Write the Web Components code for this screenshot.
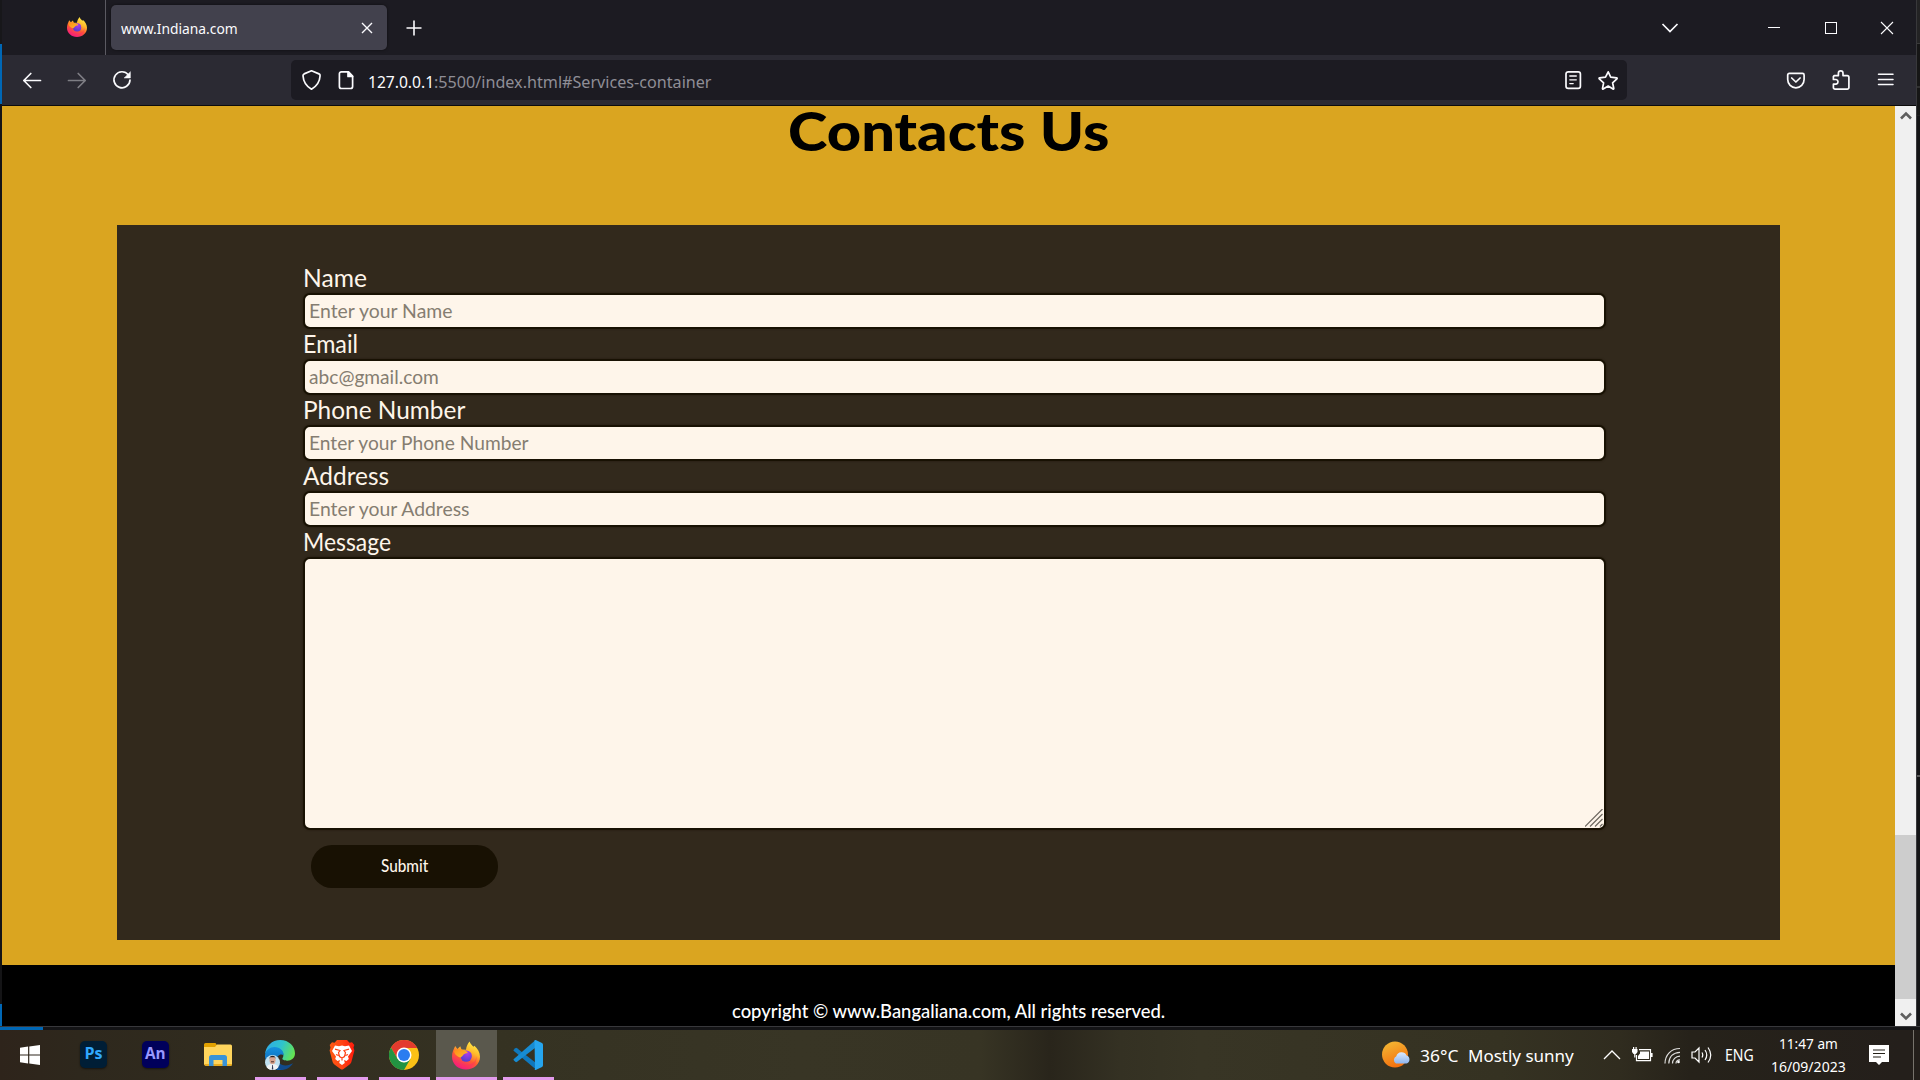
<!DOCTYPE html>
<html lang="en">
<head>
<meta charset="utf-8">
<title>www.Indiana.com</title>
<style>
html,body{margin:0;padding:0;width:1920px;height:1080px;overflow:hidden;background:#141416}
</style>
</head>
<body>
<desktop-screen></desktop-screen>
<script>
const define = (name, html, init) => {
  const t = document.createElement('template');
  t.innerHTML = html;
  customElements.define(name, class extends HTMLElement {
    connectedCallback() {
      if (this.shadowRoot) return;
      this.attachShadow({mode: 'open'}).append(t.content.cloneNode(true));
      if (init) init(this, this.shadowRoot);
    }
  });
};

define('desktop-screen', `
<style>
:host{display:flex;flex-direction:column;width:1920px;height:1080px;overflow:hidden}
.top{display:flex;height:1026px}
.l{width:2px;background:linear-gradient(#17171a 0 44px,#0067b5 44px 104px,#141416 104px 1004px,#0067b5 1004px)}
.r{width:4px;box-sizing:border-box;border-left:1px solid #38383b;background:linear-gradient(#232324 0 43px,#3a3a3a 43px 44px,#161616 44px 86px,#303030 86px 88px,#161616 88px 115px,#1f1f1f 115px 116px,#141416 116px 775px,#5a5a5a 775px 777px,#141416 777px)}
.edge{height:4px;box-sizing:border-box;border-top:1px solid #38383b;background:linear-gradient(90deg,#0067b5 43px,#141416 43px)}
browser-window{flex:1}
</style>
<div class="top"><div class="l"></div><browser-window></browser-window><div class="r"></div></div>
<div class="edge"></div>
<task-bar></task-bar>`);

define('browser-window', `
<style>
:host{display:flex;flex-direction:column;height:1026px;min-width:0}
.view{display:flex;height:920px;border-top:1px solid #0c0c0d}
contact-page{flex:1}
</style>
<tab-strip></tab-strip><nav-bar></nav-bar>
<div class="view"><contact-page></contact-page><scroll-bar></scroll-bar></div>`);

define('fire-fox', `
<style>:host{display:block}svg{display:block;width:100%;height:100%}</style>
<svg viewBox="0 0 28 28">
<defs>
<linearGradient id="a" x1=".8" y1="0" x2=".3" y2="1"><stop offset="0" stop-color="#fff14c"/><stop offset=".35" stop-color="#ffb92a"/><stop offset=".62" stop-color="#ff5b32"/><stop offset="1" stop-color="#f2128a"/></linearGradient>
<radialGradient id="b" cx=".6" cy=".25" r=".8"><stop offset="0" stop-color="#b23be8"/><stop offset="1" stop-color="#4b3fcf"/></radialGradient>
<linearGradient id="c" x1="0" y1="0" x2="1" y2="1"><stop offset="0" stop-color="#ff8a16"/><stop offset="1" stop-color="#ffbd2b"/></linearGradient>
</defs>
<path d="M3.2 4.6 5.4 7.4 8.3 4.8 9.5 8 14 8.2C14.3 4.6 16 2 17.6 0c.5 2.2 2.3 3.5 3.8 5.2l1-1C25.500 7 28 10.600 28 15.200 28 22.500 21.800 28 14 28S0 22.600 0 15.200C0 11 1.600 7.800 3.200 4.600Z" fill="url(#a)"/>
<circle cx="14.200" cy="14.600" r="5.700" fill="url(#b)"/>
<path d="M2 9.500 5.400 7.400 9.500 8l4.300 1.500c1.400.5 2.100 1 1.700 1.700-1.200 1-3.100.7-3.900 1.900-.6 1.200-1.700 2-2.900 2.800C5.400 15.500 2.500 13 2 9.500Z" fill="url(#c)"/>
<path d="M0 15c2 5 6 8.500 13 8.500S24 20 24.300 15c.9 4-1.500 8.600-6 10.500C10 29 1.500 24 0 15Z" fill="#ff2d63" opacity=".45"/>
</svg>`);

define('tab-strip', `
<style>
:host{display:flex;align-items:center;height:55px;background:#1c1b22;color:#fbfbfe}
.ff{width:20px;height:20px;margin:-1px 18px 0 65px}
.sep{width:1px;height:55px;background:#5b5a62;margin-right:5px}
.tab{display:flex;align-items:center;box-sizing:border-box;width:276px;height:45px;background:#42414d;border-radius:5px;padding-left:10px;box-shadow:0 0 3px #0008}
.tab .x{margin-left:122.500px}
svg{display:block;fill:none;stroke:#fbfbfe}
</style>
<fire-fox class="ff"></fire-fox><div class="sep"></div>
<div class="tab"><fit-text w="117" font="Noto Sans" size="15" h="22" dy="0">www.Indiana.com</fit-text>
<svg class="x" width="12" height="12" stroke-width="1.4"><path d="M1 1 11 11M11 1 1 11"/></svg></div>
<svg width="16" height="16" stroke-width="1.6" style="margin-left:18.500px"><path d="M8 .5v15M.5 8h15"/></svg>
<svg width="18" height="12" stroke-width="1.7" style="margin-left:1239.500px"><path d="m1.500 2 7.500 7.500L16.500 2"/></svg>
<svg width="12" height="12" stroke-width="1" style="margin-left:89px" shape-rendering="crispEdges"><path d="M0 5.500h12"/></svg>
<svg width="12" height="12" stroke-width="1" style="margin-left:45px" shape-rendering="crispEdges"><path d="M.5.500h11v11H.500z"/></svg>
<svg width="14" height="14" stroke-width="1.1" style="margin-left:43px"><path d="M1 1 13 13M13 1 1 13"/></svg>`);

define('nav-bar', `
<style>
:host{display:flex;align-items:center;height:50px;background:#2b2a33}
svg{display:block;fill:none;stroke:#fbfbfe;stroke-width:1.7;stroke-linejoin:round;stroke-linecap:round}
.url{display:flex;align-items:center;box-sizing:border-box;width:1336px;height:40px;margin-left:159px;background:#1c1b22;border-radius:5px;padding-left:10.500px}
.h{color:#fbfbfe}.g{color:#8f8e96}
</style>
<svg width="20" height="20" style="margin-left:20px"><path d="M18.500 10.500H1.800M8.800 3.500 1.800 10.500l7 7"/></svg>
<svg width="20" height="20" style="margin-left:25px;opacity:.4"><path d="M1.500 10.500h16.700M11.200 3.500l7 7-7 7"/></svg>
<svg width="20" height="20" style="margin-left:25px"><path d="M16.300 4.800A8 8 0 1 0 18 10"/><path d="M18.400 2v6h-6z" fill="#fbfbfe" stroke-width=".5"/></svg>
<div class="url">
<svg width="20" height="22"><path d="M9.500 1.800 17 4.900c.9.400 1.200.9 1.100 1.900-.4 6.200-3.300 10.500-8.600 13.400C4.200 17.300 1.400 13 1 6.800c0-1 .3-1.500 1.100-1.900z"/></svg>
<svg width="16" height="20" style="margin-left:16px"><path d="M3.500 1.800h7L14.600 6v10.500a2 2 0 0 1-2 2H3.400a2 2 0 0 1-2-2V3.800a2 2 0 0 1 2-2z"/><path d="M10 1.800V6.500h4.600z" fill="#fbfbfe"/></svg>
<fit-text class="h" style="margin-left:14.500px" w="66" font="Noto Sans" size="16.8" h="24" dy="1.500">127.0.0.1</fit-text><fit-text class="g" w="278" font="Noto Sans" size="16.8" h="24" dy="1.500">:5500/index.html#Services-container</fit-text>
<svg width="17" height="20" style="margin-left:853px"><rect x="1" y="1.800" width="14.400" height="16.600" rx="2.200"/><path d="M4.800 6h6.500M4.800 9.800h6.500M4.800 13.600h3.400" stroke-width="1.300"/></svg>
<svg width="21" height="21" style="margin-left:16px"><path d="m10.200 1.800 2.500 5.400 5.900.7c.6.100.7.500.3.900l-4.300 4 1.200 5.700c0 .6-.4.800-.8.500l-4.800-2.900-5 2.900c-.5.300-.8 0-.7-.5l1.100-5.700-4.300-4c-.4-.4-.3-.8.300-.9l5.900-.7z"/></svg>
</div>
<svg width="20" height="20" style="margin-left:159px"><path d="M3.300 3.300h13.200a1.600 1.600 0 0 1 1.600 1.600v4.700a8.200 8.200 0 0 1-16.400 0V4.900a1.600 1.600 0 0 1 1.600-1.600z"/><path d="m5.700 8 4.200 4 4.200-4"/></svg>
<svg width="20" height="22" style="margin-left:26px"><path d="M2.200 6.600h4.200V4.200a2.300 2.300 0 0 1 4.600 0v2.400h4.200a1.700 1.700 0 0 1 1.700 1.700v10.200a1.600 1.600 0 0 1-1.700 1.600H3a1.600 1.600 0 0 1-1.600-1.600v-3.300h2.700a2.400 2.400 0 0 0 0-4.700H1.400V7.600z"/></svg>
<svg width="18" height="20" style="margin-left:25px;stroke-width:1.500"><path d="M1.500 4.200h14.500M1.500 9.400h14.500M1.500 14.600h14.500"/></svg>`);

define('scroll-bar', `
<style>
:host{display:flex;flex-direction:column;width:21px;height:920px;background:#f0f0f0;align-items:center}
.thumb{flex:none;width:21px;height:164px;background:#cdcdcd;margin:714px 0 13px}
svg{display:block;flex:none;fill:none;stroke:#5e5e5e;stroke-width:2.600}
</style>
<svg width="12" height="10" style="margin-top:5px"><path d="m1 7.500 5-5 5 5"/></svg>
<div class="thumb"></div>
<svg width="12" height="10"><path d="m1 1.500 5 5 5-5"/></svg>`);

define('form-field', `
<style>
:host{display:block;height:66px}
.lab{height:32px;color:#fef5ea}
.box{box-sizing:border-box;height:36px;border:2px solid #181103;border-radius:7px;background:#fef5ea;padding:2px 4px 0;color:#857d71;margin-top:-2px;box-shadow:0 0 2px #181103aa}
:host([area]) .box{height:273px}
:host([area]){height:301px}
.box{display:flex;justify-content:space-between}
svg{display:none;align-self:flex-end;margin:0 -3px 1px 0}
:host([area]) svg{display:block}
</style>
<div class="lab"><slot name="label"></slot></div>
<div class="box"><slot></slot><svg width="18" height="18" fill="none" stroke="#6d675f" stroke-width="1.200"><path d="M0 17.500 17.500 0M5 17.500 17.500 5M10 17.500 17.500 10M15 17.500l2.500-2.500"/></svg></div>`);

define('contact-page', `
<style>
:host{display:flex;flex-direction:column;align-items:flex-start;background:#daa520;height:920px}
.head{height:119px;padding-left:786px;color:#000}
.panel{box-sizing:border-box;margin-left:115px;width:1663px;height:715px;background:#32291c;padding:38px 174px 0 186px}
.btn{display:flex;justify-content:center;align-items:center;width:187px;height:43px;border-radius:21px;background:#181103;color:#fef5ea;margin:17px 0 0 8px}
.foot{box-sizing:border-box;align-self:stretch;height:61px;margin-top:25px;background:#000;color:#fff;padding:33px 0 0 730px}
</style>
<div class="head"><fit-text w="321" font="Lato" weight="900" size="53" h="50" dy="-.5">Contacts Us</fit-text></div>
<div class="panel">
<form-field><fit-text slot="label" w="64" size="25" h="30" dy="-.8">Name</fit-text><fit-text w="143" size="19" h="26" dy="1">Enter your Name</fit-text></form-field>
<form-field><fit-text slot="label" w="55" size="25" h="30" dy="-.8">Email</fit-text><fit-text w="130" size="19" h="26" dy="1">abc@gmail.com</fit-text></form-field>
<form-field><fit-text slot="label" w="162" size="25" h="30" dy="-.8">Phone Number</fit-text><fit-text w="220" size="19" h="26" dy="1">Enter your Phone Number</fit-text></form-field>
<form-field><fit-text slot="label" w="86" size="25" h="30" dy="-.8">Address</fit-text><fit-text w="160" size="19" h="26" dy="1">Enter your Address</fit-text></form-field>
<form-field area><fit-text slot="label" w="88" size="25" h="30" dy="-.8">Message</fit-text><span></span></form-field>
<div class="btn"><fit-text w="47" size="16.300" weight="500" h="22" dy="-.8">Submit</fit-text></div>
</div>
<div class="foot"><fit-text w="433" size="18.800" weight="500" h="26">copyright © www.Bangaliana.com, All rights reserved.</fit-text></div>`);

define('task-app', `
<style>
:host{display:flex;flex-direction:column;align-items:center;justify-content:space-between;box-sizing:border-box;height:50px;width:51px;padding-top:10px}
:host([active]){width:61px;background:#5a584d}
.i{height:30px;display:flex;align-items:center;justify-content:center;margin-left:-1px}
.u{height:3px;align-self:stretch}
:host([open]) .u{background:#e39bec}
::slotted(svg){display:block}
</style><div class="i"><slot></slot></div><div class="u"></div>`);

define('adobe-tile', `
<style>:host{display:flex;align-items:center;justify-content:center;width:27px;height:27px;border-radius:5px;background:var(--bg);color:var(--fg);box-shadow:0 1px 2px #0008;margin:-2px 0 0 1px}</style><slot></slot>`);

define('task-bar', `
<style>
:host{display:flex;height:50px;color:#fff;background:linear-gradient(90deg,#2e241b 0,#2e281d 80px,#322e20 300px,#353222 500px,#383525 800px,#373424 980px,#29251b 1050px,#343123 1120px,#383525 1200px,#353222 1500px,#302c1f 1620px,#26221a 1690px,#241f1b 1900px)}
.tray{display:flex;align-items:center;margin-left:auto;height:50px}
.clk{display:flex;flex-direction:column;align-items:center;width:76px;margin-left:16px}
.w{fill:none;stroke:#fff}
svg{display:block;flex:none}
</style>
<task-app style="margin-left:5px"><svg width="20" height="20" fill="#fff"><path d="M0 2.800 8.100 1.600V9.400H0zM9.300 1.400 20 0v9.400H9.300zM0 10.600h8.100v7.800L0 17.200zM9.300 10.600H20V20L9.300 18.600z"/></svg></task-app>
<task-app style="margin-left:12px"><adobe-tile style="--bg:#001e36;--fg:#31a8ff"><fit-text font="Open Sans" weight="700" size="16" w="18" h="20" dy="-1">Ps</fit-text></adobe-tile></task-app>
<task-app style="margin-left:11px"><adobe-tile style="--bg:#00005b;--fg:#9999ff"><fit-text font="Open Sans" weight="700" size="16" w="21" h="20" dy="-1">An</fit-text></adobe-tile></task-app>
<task-app style="margin-left:11px"><svg width="28" height="30" viewBox="0 0 28 30" style="margin-left:1px"><path d="M0 4.500A1.500 1.500 0 0 1 1.500 3h10l2 3H27v6H0z" fill="#e2a100"/><path d="M0 7h11l2-2.500h13.500A1.500 1.500 0 0 1 28 6v18a1.500 1.500 0 0 1-1.500 1.500h-25A1.500 1.500 0 0 1 0 24z" fill="#ffd55d"/><path d="M0 24h28v.5a1.500 1.500 0 0 1-1.500 1.500h-25z" fill="#e9ac20"/><path d="M5 26V17.500A2.500 2.500 0 0 1 7.500 15h13a2.500 2.500 0 0 1 2.500 2.500V26h-4.500v-6h-9v6z" fill="#3993d8"/></svg></task-app>
<task-app open style="margin-left:12px"><svg width="30" height="30" viewBox="0 0 30 30"><defs><linearGradient id="e1" x1="0" y1=".3" x2="1" y2=".6"><stop offset="0" stop-color="#2fabe7"/><stop offset=".5" stop-color="#2fc4cc"/><stop offset="1" stop-color="#66e44e"/></linearGradient><linearGradient id="e2" x1="0" y1="0" x2="0" y2="1"><stop offset="0" stop-color="#1591df"/><stop offset="1" stop-color="#0c59a5"/></linearGradient></defs>
<path d="M0 15C.500 6 7 0 15.200 0 24 0 30 6.500 30 13.200c0 4.700-3.500 7.500-7.800 7.500-3.500 0-5.500-1.300-4.600-2.600C20 14.500 17 8 10 8 5 8 1 11 0 15Z" fill="url(#e1)"/><path d="M0 15C1 10 5 7 9.500 7c6 0 9.500 4.500 9 8-4-2-8 2-6.500 7.500 1 3.500 4 6.500 7 7.500-2 .5-4 .2-6-.1C5 28.500-.5 22 0 15Z" fill="url(#e2)"/><path d="M12.500 16c-2 5 3 9.500 8 9.500 3 0 5-1 7.500-2.200C25.500 27.500 21 30 16.500 30 10 28 9 19 12.500 16Z" fill="#114a8b"/>
<circle cx="7.500" cy="22.500" r="7.500" fill="#bfe0f0"/><path d="M1.500 27c1-2 3-3 6-3s5 1 6 3a7.500 7.500 0 0 1-12 0Z" fill="#f0f2f5"/><ellipse cx="7.500" cy="20.200" rx="3" ry="4.100" fill="#d9a48e"/><path d="M4.300 19c0-4.500 6.400-4.500 6.400 0l-1-1.700H5.300z" fill="#2b2223"/><path d="M6 21.800h3" stroke="#3b2320" stroke-width=".9"/><path d="m7.200 25-.4 4.500h1.500L7.900 25z" fill="#333b55"/></svg></task-app>
<task-app open style="margin-left:11px"><svg width="26" height="30" viewBox="0 0 26 30"><defs><linearGradient id="b1"><stop offset="0" stop-color="#ff5a12"/><stop offset=".5" stop-color="#ff4414"/><stop offset="1" stop-color="#ff1b0c"/></linearGradient></defs><path d="M8 0h10l2.500 2.700 2.500-.4 2.300 2.800-.8 2.500.9 3-2.900 11c-.4 1.500-1 2.300-2.200 3.200L14.500 29q-1.500 1-3 0l-5.800-4.200c-1.200-.9-1.800-1.700-2.200-3.200L.6 10.600l.9-3L.7 5.100 3 2.300l2.500.4z" fill="url(#b1)"/><path d="m6 5.500 4 .8 3-.8 3 .8 4-.8 3 5.500-4 5.500.8 2.500-2.300 2-2.500-1 .8 3-2.800 2-2.800-2 .8-3-2.500 1-2.300-2 .8-2.500-4-5.500z" fill="#fff"/><path d="m6 9.200 5 1.300-1.500 2.200 1 3.800L13 18l2.500-1.500 1-3.800-1.500-2.200 5-1.300M7 14.500l2.500 1M19 14.500l-2.500 1M13 18v2.500" fill="none" stroke="#ff4012" stroke-width="1.200"/></svg></task-app>
<task-app open style="margin-left:11px"><svg width="30" height="30" viewBox="0 0 30 30"><circle cx="15" cy="15" r="15" fill="#fbc116"/><path d="M2 7.500A15 15 0 0 1 28 7.500L15 8.200 8.500 18.800z" fill="#e33b2e"/><path d="M2 7.500A15 15 0 0 0 15 30L21.500 18.800 15 22.500 8.500 18.800z" fill="#229342"/><path d="M15 7.500h13" stroke="#e33b2e" stroke-width="1"/><circle cx="15" cy="15" r="7.500" fill="#fff"/><circle cx="15" cy="15" r="6" fill="#2b7df0"/></svg></task-app>
<task-app open active style="margin-left:6px"><fire-fox style="width:28px;height:29px"></fire-fox></task-app>
<task-app open style="margin-left:6px"><svg width="30" height="30" viewBox="0 0 30 30"><path d="M.5 10 2.300 8.200q.8-.7 1.800 0L23 23v6.500L.6 10.800z" fill="#0f78bd"/><path d="M.5 20 2.300 21.800q.8.700 1.800 0L22 8V.500L.6 19.200z" fill="#178cd3"/><path d="m21.500.3 1.200-.3 6.300 3q1 .500 1 1.700v20.600q0 1.200-1 1.700l-6.300 3-1.200-.3L22 29z" fill="#26a5ee"/></svg></task-app>
<div class="tray">
<svg width="29" height="28" viewBox="0 0 29 28"><defs><linearGradient id="s" x1="0" y1="0" x2=".4" y2="1"><stop offset="0" stop-color="#f3bd37"/><stop offset="1" stop-color="#f4720f"/></linearGradient><linearGradient id="cl" x1="0" y1="0" x2="0" y2="1"><stop offset="0" stop-color="#dbe9fd"/><stop offset="1" stop-color="#8db5ee"/></linearGradient></defs><circle cx="13" cy="13.500" r="13" fill="url(#s)"/><path d="M14 22.500a4 4 0 0 1 .3-7.200 5.500 5.500 0 0 1 10.300-.8A4.200 4.200 0 0 1 24.500 22.500z" fill="url(#cl)"/></svg>
<fit-text style="margin-left:9px" font="Noto Sans" size="17" w="38" h="26" dy="0.500">36°C</fit-text>
<fit-text style="margin-left:10px" font="Noto Sans" size="17" w="106" h="26" dy="0.500">Mostly sunny</fit-text>
<svg class="w" width="18" height="12" stroke-width="1.300" style="margin-left:29px"><path d="m1 10 8-8 8 8"/></svg>
<svg width="21" height="16" viewBox="0 0 21 16" style="margin-left:11px"><path d="M7 2.600h11.500v11H4.500V8" fill="none" stroke="#fff" stroke-width="1.200"/><path d="M8 4.400h9v7.500H6V9l2-2.500zM19 6h1.600v4H19zM0 2h5.500v3L4 7H1.500L0 5zM1 0h1.200v3H1zM3.500 0h1.200v3H3.500zM2.200 7h1.200v3.500h-1.200z" fill="#fff"/></svg>
<svg class="w" width="17" height="17" stroke-width="1.200" style="margin-left:11px"><path d="M1 16.500C1 8 7 1.500 16 1.500M4.800 16.500C5 10 9 5.500 16 5.300M8.500 16.500c0-4 3-7.200 7.500-7.300M12 16.500c0-2.200 1.500-3.600 4-3.700" opacity=".85"/><circle cx="14.500" cy="15" r="1.300" fill="#fff" stroke="none"/></svg>
<svg class="w" width="22" height="18" stroke-width="1.200" style="margin-left:10px"><path d="M1 6h3l4-4v14l-4-4H1zM11 6.500q1.500 2.500 0 5M14 4q3.500 5 0 10M17 1.500q5.500 7.500 0 15"/></svg>
<fit-text style="margin-left:12px" font="Noto Sans" size="15.500" w="29" h="26" dy="0">ENG</fit-text>
<div class="clk"><fit-text font="Noto Sans" size="14.800" w="59" h="23">11:47 am</fit-text><fit-text font="Noto Sans" size="14.800" w="75" h="23">16/09/2023</fit-text></div>
<svg width="20" height="20" style="margin:0 24px 0 23px"><path d="M0 0h20v17h-7l-3 3-3-3H0z" fill="#fff"/><path d="M4 5h12M4 8.500h12M4 12h8" stroke="#242018" stroke-width="1.200"/></svg>
<div style="width:1px;height:50px;background:#77736c;margin-right:6px"></div>
</div>`);

/* One line of text stretched horizontally to the advance given by its "w" attribute. */
define('fit-text', `
<style>:host{display:block;flex:none;white-space:nowrap}span{display:inline-block;transform-origin:0 50%}</style><span><slot></slot></span>`,
(el, root) => {
  const s = root.querySelector('span'), a = n => el.getAttribute(n);
  s.style.fontFamily = '"' + (a('font') || 'Lato') + '", "Liberation Sans", sans-serif';
  s.style.fontSize = a('size') + 'px';
  s.style.fontWeight = a('weight') || 400;
  s.style.lineHeight = a('h') + 'px';
  el.style.width = a('w') + 'px';
  el.style.height = a('h') + 'px';
  s.style.transform = 'translateY(' + (a('dy') || 0) + 'px) scaleX(' + (+a('w') / s.offsetWidth) + ')';
});
</script>
</body>
</html>
